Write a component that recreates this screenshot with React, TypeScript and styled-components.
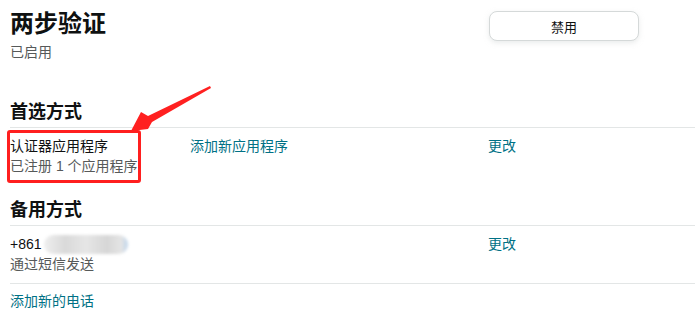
import React from "react";
import styled, { createGlobalStyle } from "styled-components";

const Global = createGlobalStyle`
  html, body { margin: 0; padding: 0; background: #fff; }
  body {
    font-family: "Liberation Sans", Arial, "Noto Sans CJK SC", sans-serif;
    color: #0f1111;
  }
`;

const Page = styled.div`
  position: relative;
  width: 695px;
  height: 322px;
  overflow: hidden;
  padding-left: 10px;
  box-sizing: border-box;
`;

const Header = styled.div`
  display: grid;
  grid-template-columns: 479px 150px;
  padding-top: 10px;
`;

const TitleBlock = styled.div`
  display: flex;
  flex-direction: column;
  gap: 4px;
`;

const Title = styled.h1`
  margin: 0;
  font-size: 24px;
  line-height: 28px;
  font-weight: 700;
`;

const Muted = styled.div`
  font-size: 14px;
  line-height: 20px;
  color: #565959;
`;

const Button = styled.button`
  margin-top: 1px;
  height: 30px;
  width: 150px;
  border: 1px solid #d5d9d9;
  border-radius: 8px;
  background: #fff;
  box-shadow: 0 2px 5px rgba(213, 217, 217, 0.5);
  font-family: inherit;
  font-size: 13px;
  color: #0f1111;
  cursor: pointer;
`;

const SectionTitle = styled.h2<{ $top: number }>`
  margin: ${(p) => p.$top}px 0 3px;
  font-size: 18px;
  line-height: 24px;
  font-weight: 700;
`;

const Row = styled.div<{ $bottom?: boolean }>`
  display: grid;
  grid-template-columns: 180px 298px 1fr;
  border-top: 1px solid #e3e6e6;
  ${(p) => (p.$bottom ? "border-bottom: 1px solid #e3e6e6; padding: 8px 0 9px;" : "padding: 8px 0;")}
  font-size: 14px;
  line-height: 20px;
`;

const Cell = styled.div`
  display: flex;
  flex-direction: column;
`;

const Link = styled.a`
  color: #007185;
  text-decoration: none;
  font-size: 14px;
  line-height: 20px;
  cursor: pointer;
`;

const Phone = styled.div`
  display: flex;
  align-items: center;
`;

const Blur = styled.span`
  display: inline-block;
  width: 84px;
  height: 19px;
  margin-left: 2px;
  border-radius: 10px;
  background: linear-gradient(90deg, #efefef 0%, #d9d9d9 25%, #e6e6e6 50%, #d6d6d6 75%, #e4e4e4 92%, #bcd4ec 100%);
  filter: blur(1.5px);
`;

const Footer = styled.div`
  padding-top: 7px;
`;

const Highlight = styled.div`
  position: absolute;
  left: 7px;
  top: 130px;
  width: 134px;
  height: 53px;
  box-sizing: border-box;
  border: 3px solid #ff1f1f;
  border-radius: 3px;
  pointer-events: none;
`;

const Arrow = styled.svg`
  position: absolute;
  left: 0;
  top: 0;
  pointer-events: none;
`;

export default function App() {
  return (
    <>
      <Global />
      <Page>
        <Header>
          <TitleBlock>
            <Title>两步验证</Title>
            <Muted>已启用</Muted>
          </TitleBlock>
          <Button>禁用</Button>
        </Header>

        <SectionTitle $top={38}>首选方式</SectionTitle>
        <Row>
          <Cell>
            <span>认证器应用程序</span>
            <Muted>已注册 1 个应用程序</Muted>
          </Cell>
          <Cell>
            <Link>添加新应用程序</Link>
          </Cell>
          <Cell>
            <Link>更改</Link>
          </Cell>
        </Row>

        <SectionTitle $top={14}>备用方式</SectionTitle>
        <Row $bottom>
          <Cell>
            <Phone>
              +861
              <Blur />
            </Phone>
            <Muted>通过短信发送</Muted>
          </Cell>
          <Cell />
          <Cell>
            <Link>更改</Link>
          </Cell>
        </Row>
        <Footer>
          <Link>添加新的电话</Link>
        </Footer>

        <Highlight />
        <Arrow width="695" height="322" viewBox="0 0 695 322">
          <polygon
            points="210,86 148,116 141,112 131,131 148,129 152,122 211,88"
            fill="#ff2020"
          />
        </Arrow>
      </Page>
    </>
  );
}
